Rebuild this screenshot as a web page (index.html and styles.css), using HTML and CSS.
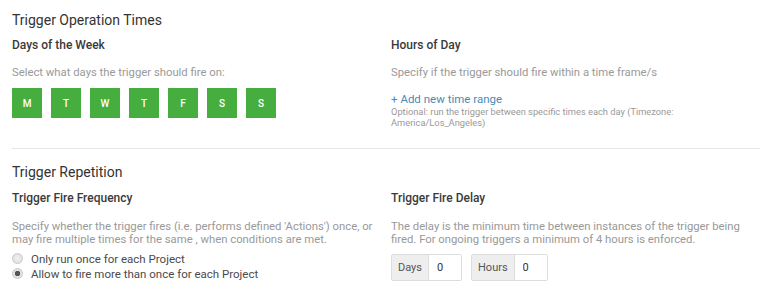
FILE: index.html
```html
<!DOCTYPE html>
<html lang="en">

<head>
    <meta charset="UTF-8">
    <title>Trigger Settings</title>
    <link rel="stylesheet" href="styles.css">
</head>

<body>
    <section class="block">
        <h2 class="block-title">Trigger Operation Times</h2>
        <div class="cols">
            <div class="col">
                <h3 class="field-title">Days of the Week</h3>
                <p class="help">Select what days the trigger should fire on:</p>
                <div class="days">
                    <button class="day">M</button>
                    <button class="day">T</button>
                    <button class="day">W</button>
                    <button class="day">T</button>
                    <button class="day">F</button>
                    <button class="day">S</button>
                    <button class="day">S</button>
                </div>
            </div>
            <div class="col">
                <h3 class="field-title">Hours of Day</h3>
                <p class="help">Specify if the trigger should fire within a time frame/s</p>
                <a class="add-link" href="#">+ Add new time range</a>
                <p class="note">Optional: run the trigger between specific times each day (Timezone: America/Los_Angeles)</p>
            </div>
        </div>
    </section>

    <hr class="divider">

    <section class="block repetition">
        <h2 class="block-title">Trigger Repetition</h2>
        <div class="cols">
            <div class="col">
                <h3 class="field-title">Trigger Fire Frequency</h3>
                <p class="help">Specify whether the trigger fires (i.e. performs defined 'Actions') once, or may fire multiple times for the same , when conditions are met.</p>
                <div class="radios">
                    <label class="radio"><input type="radio" name="freq"> Only run once for each Project</label>
                    <label class="radio"><input type="radio" name="freq" checked> Allow to fire more than once for each Project</label>
                </div>
            </div>
            <div class="col">
                <h3 class="field-title">Trigger Fire Delay</h3>
                <p class="help">The delay is the minimum time between instances of the trigger being fired. For ongoing triggers a minimum of 4 hours is enforced.</p>
                <div class="delays">
                    <div class="input-group">
                        <span class="addon">Days</span>
                        <input class="num" type="text" value="0">
                    </div>
                    <div class="input-group">
                        <span class="addon">Hours</span>
                        <input class="num" type="text" value="0">
                    </div>
                </div>
            </div>
        </div>
    </section>
</body>

</html>
```

FILE: styles.css
```css
body {
    margin: 0;
    padding: 0 12px;
    font-family: Roboto, "Liberation Sans", sans-serif;
    background: #ffffff;
    color: #333333;
}

.block-title {
    margin: 0;
    padding-top: 10px;
    font-size: 14px;
    font-weight: 400;
    line-height: 20px;
    color: #333333;
}

.cols {
    display: grid;
    grid-template-columns: 379px 1fr;
}

.col {
    padding-right: 6px;
}

.field-title {
    margin: 7px 0 0;
    font-size: 12px;
    font-weight: 500;
    line-height: 16px;
    color: #3a3a3a;
}

.help {
    margin: 13px 0 0;
    font-size: 11.3px;
    line-height: 13px;
    color: #999999;
}

.repetition .field-title {
    margin-top: 8px;
}

.repetition .help {
    margin-top: 14px;
}

.days {
    display: flex;
    gap: 9px;
    margin-top: 9px;
}

.day {
    width: 30px;
    height: 30px;
    border: none;
    padding: 0;
    background: #46ae3f;
    color: #ffffff;
    font-family: inherit;
    font-size: 10px;
    font-weight: 500;
}

.add-link {
    display: block;
    margin-top: 13px;
    font-size: 11.5px;
    line-height: 14px;
    color: #4a8bb5;
    text-decoration: none;
}

.note {
    margin: 0;
    font-size: 9.3px;
    line-height: 11px;
    color: #999999;
    max-width: 330px;
}

.divider {
    margin: 20px -10px 3px 0;
    border: none;
    border-top: 1px solid #e6e6e6;
}

.radios {
    display: flex;
    flex-direction: column;
    margin-top: 5px;
}

.radio {
    display: flex;
    align-items: center;
    height: 15px;
    font-size: 11.5px;
    color: #4a4a4a;
}

.radio input {
    appearance: none;
    margin: 0 8px 0 0;
    width: 11px;
    height: 11px;
    border: 1px solid #c8c8c8;
    border-radius: 50%;
    background: radial-gradient(circle, #f0f0f0 0%, #dcdcdc 100%);
    box-sizing: border-box;
}

.radio input:checked {
    background: radial-gradient(circle, #555555 0, #555555 2.5px, #e2e2e2 3px);
}

.delays {
    display: flex;
    gap: 9px;
    margin-top: 8px;
}

.input-group {
    display: flex;
    height: 27px;
    border: 1px solid #dddddd;
    border-radius: 2px;
    box-sizing: border-box;
}

.addon {
    display: flex;
    align-items: center;
    padding: 0 6px;
    background: #eeeeee;
    border-right: 1px solid #dddddd;
    font-size: 11px;
    color: #555555;
}

.num {
    box-sizing: border-box;
    width: 32px;
    border: none;
    padding: 0 8px;
    font-family: inherit;
    font-size: 11px;
    color: #333333;
    outline: none;
}
```
